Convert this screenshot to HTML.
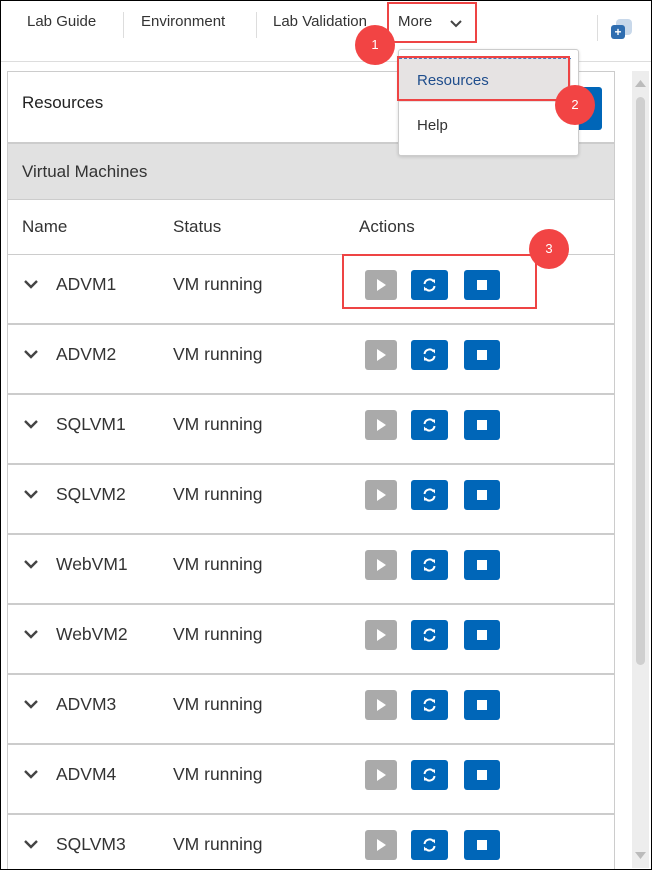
<!DOCTYPE html>
<html style="overflow:hidden"><head><meta charset="utf-8"><style>
*{box-sizing:border-box;margin:0;padding:0}
html,body{width:652px;height:870px;overflow:hidden}
body{background:#fff;font-family:"Liberation Sans",sans-serif;position:relative;color:#333}
.frame{position:absolute;left:0;top:0;width:652px;height:870px;border:1px solid #000;z-index:50;pointer-events:none}
.nav{position:absolute;top:0;left:0;width:652px;height:62px;border-bottom:1px solid #ddd}
.nav span{position:absolute;top:13px;font-size:15px;color:#333}
.sep{position:absolute;top:12px;width:1px;height:26px;background:#ddd}
.panel{position:absolute;left:7px;top:71px;width:608px;height:799px;border:1px solid #ccc;border-bottom:none;overflow:hidden}
.hdr{height:72px;border-bottom:2px solid #ccc;padding:21px 14px;font-size:17px;color:#222}
.vmh{height:56px;background:#e1e1e1;border-bottom:1px solid #ccc;padding:18px 14px;font-size:17px;color:#333}
.cols{height:55px;border-bottom:1px solid #ccc;position:relative;font-size:17px}
.cols span,.row span{position:absolute}
.row{height:70px;border-bottom:2px solid #ccc;position:relative;font-size:17.5px;color:#333}
.b{position:absolute;top:15px;height:30px;border-radius:3px}
.play{left:357px;width:32px;background:#aaa}
.ref{left:403px;width:37px;background:#0066b8}
.stop{left:456px;width:36px;background:#0066b8}
.circ{position:absolute;width:40px;height:40px;border-radius:50%;background:#f24444;color:#fff;font-size:13px;text-align:center;line-height:40px;z-index:30}
.redbox{position:absolute;border:2px solid #ee4444;z-index:25}
</style></head><body>
<div class="frame"></div>
<div class="nav">
<span style="left:27px">Lab Guide</span><div class="sep" style="left:123px"></div>
<span style="left:141px">Environment</span><div class="sep" style="left:256px"></div>
<span style="left:273px">Lab Validation</span>
<span style="left:398px">More</span>
<svg style="position:absolute;left:449px;top:19px" width="14" height="10" viewBox="0 0 14 10"><path d="M2 2l5 5 5-5" stroke="#444" stroke-width="2" fill="none"/></svg>
<div class="sep" style="left:597px;top:15px"></div>
<div style="position:absolute;left:616px;top:19px;width:16px;height:16px;border-radius:4px;background:#c8d8ea"></div>
<div style="position:absolute;left:611px;top:25px;width:14px;height:14px;border-radius:3px;background:#2e6db0;color:#fff;font-size:12px;line-height:14px;text-align:center;font-weight:bold">+</div>
</div>
<div class="redbox" style="left:387px;top:2px;width:90px;height:41px"></div>
<div class="circ" style="left:355px;top:25px">1</div>

<div class="panel">
<div class="hdr">Resources</div>
<div style="position:absolute;left:566px;top:15px;width:28px;height:43px;background:#0066b8;border-radius:3px"></div>
<div class="vmh">Virtual Machines</div>
<div class="cols"><span style="left:14px;top:17px">Name</span><span style="left:165px;top:17px">Status</span><span style="left:351px;top:17px">Actions</span></div>
<div id="rows"></div>
</div>

<div style="position:absolute;left:398px;top:49px;width:181px;height:107px;background:#fff;border:1px solid #ccc;border-radius:3px;z-index:20;box-shadow:0 1px 3px rgba(0,0,0,.15)">
<div style="position:absolute;left:0;top:8px;width:172px;height:44px;background:#e6e3e3;border-top:1px dashed #4a7ac0"></div>
<span style="position:absolute;left:18px;top:22px;font-size:15px;color:#1f4d8c">Resources</span>
<span style="position:absolute;left:18px;top:67px;font-size:15px;color:#333">Help</span>
</div>
<div class="redbox" style="left:397px;top:56px;width:173px;height:45px"></div>
<div class="circ" style="left:555px;top:85px">2</div>
<div class="redbox" style="left:342px;top:254px;width:195px;height:55px"></div>
<div class="circ" style="left:529px;top:229px">3</div>

<div style="position:absolute;left:632px;top:71px;width:17px;height:797px;background:#ededed">
<svg style="position:absolute;left:3px;top:8px" width="11" height="8"><path d="M0 8L5.5 1 11 8z" fill="#bbb"/></svg>
<div style="position:absolute;left:4px;top:26px;width:9px;height:568px;border-radius:5px;background:#cfcfcf"></div>
<svg style="position:absolute;left:3px;top:781px" width="11" height="8"><path d="M0 0L5.5 7 11 0z" fill="#bbb"/></svg>
</div>
<script>
var n=["ADVM1","ADVM2","SQLVM1","SQLVM2","WebVM1","WebVM2","ADVM3","ADVM4","SQLVM3"],h="";
n.forEach(function(x){h+='<div class="row"><svg style="position:absolute;left:15px;top:23px" width="16" height="12" viewBox="0 0 16 12"><path d="M2 3l6 6 6-6" stroke="#444" stroke-width="2.4" fill="none"/></svg><span style="left:48px;top:19px">'+x+'</span><span style="left:165px;top:19px">VM running</span>'+
'<div class="b play"><svg width="32" height="30"><path d="M12 9l9 6-9 6z" fill="#fff"/></svg></div>'+
'<div class="b ref"><svg width="37" height="30" viewBox="0 0 37 30"><path d="M13.5 14a5 5 0 0 1 9-2.5M23.5 16a5 5 0 0 1-9 2.5" stroke="#fff" stroke-width="2" fill="none"/><path d="M20 9.5h4v4zM17 20.5h-4v-4z" fill="#fff"/></svg></div>'+
'<div class="b stop"><div style="position:absolute;left:13px;top:10px;width:10px;height:10px;background:#fff"></div></div></div>'});
document.getElementById("rows").innerHTML=h;
</script>
</body></html>
